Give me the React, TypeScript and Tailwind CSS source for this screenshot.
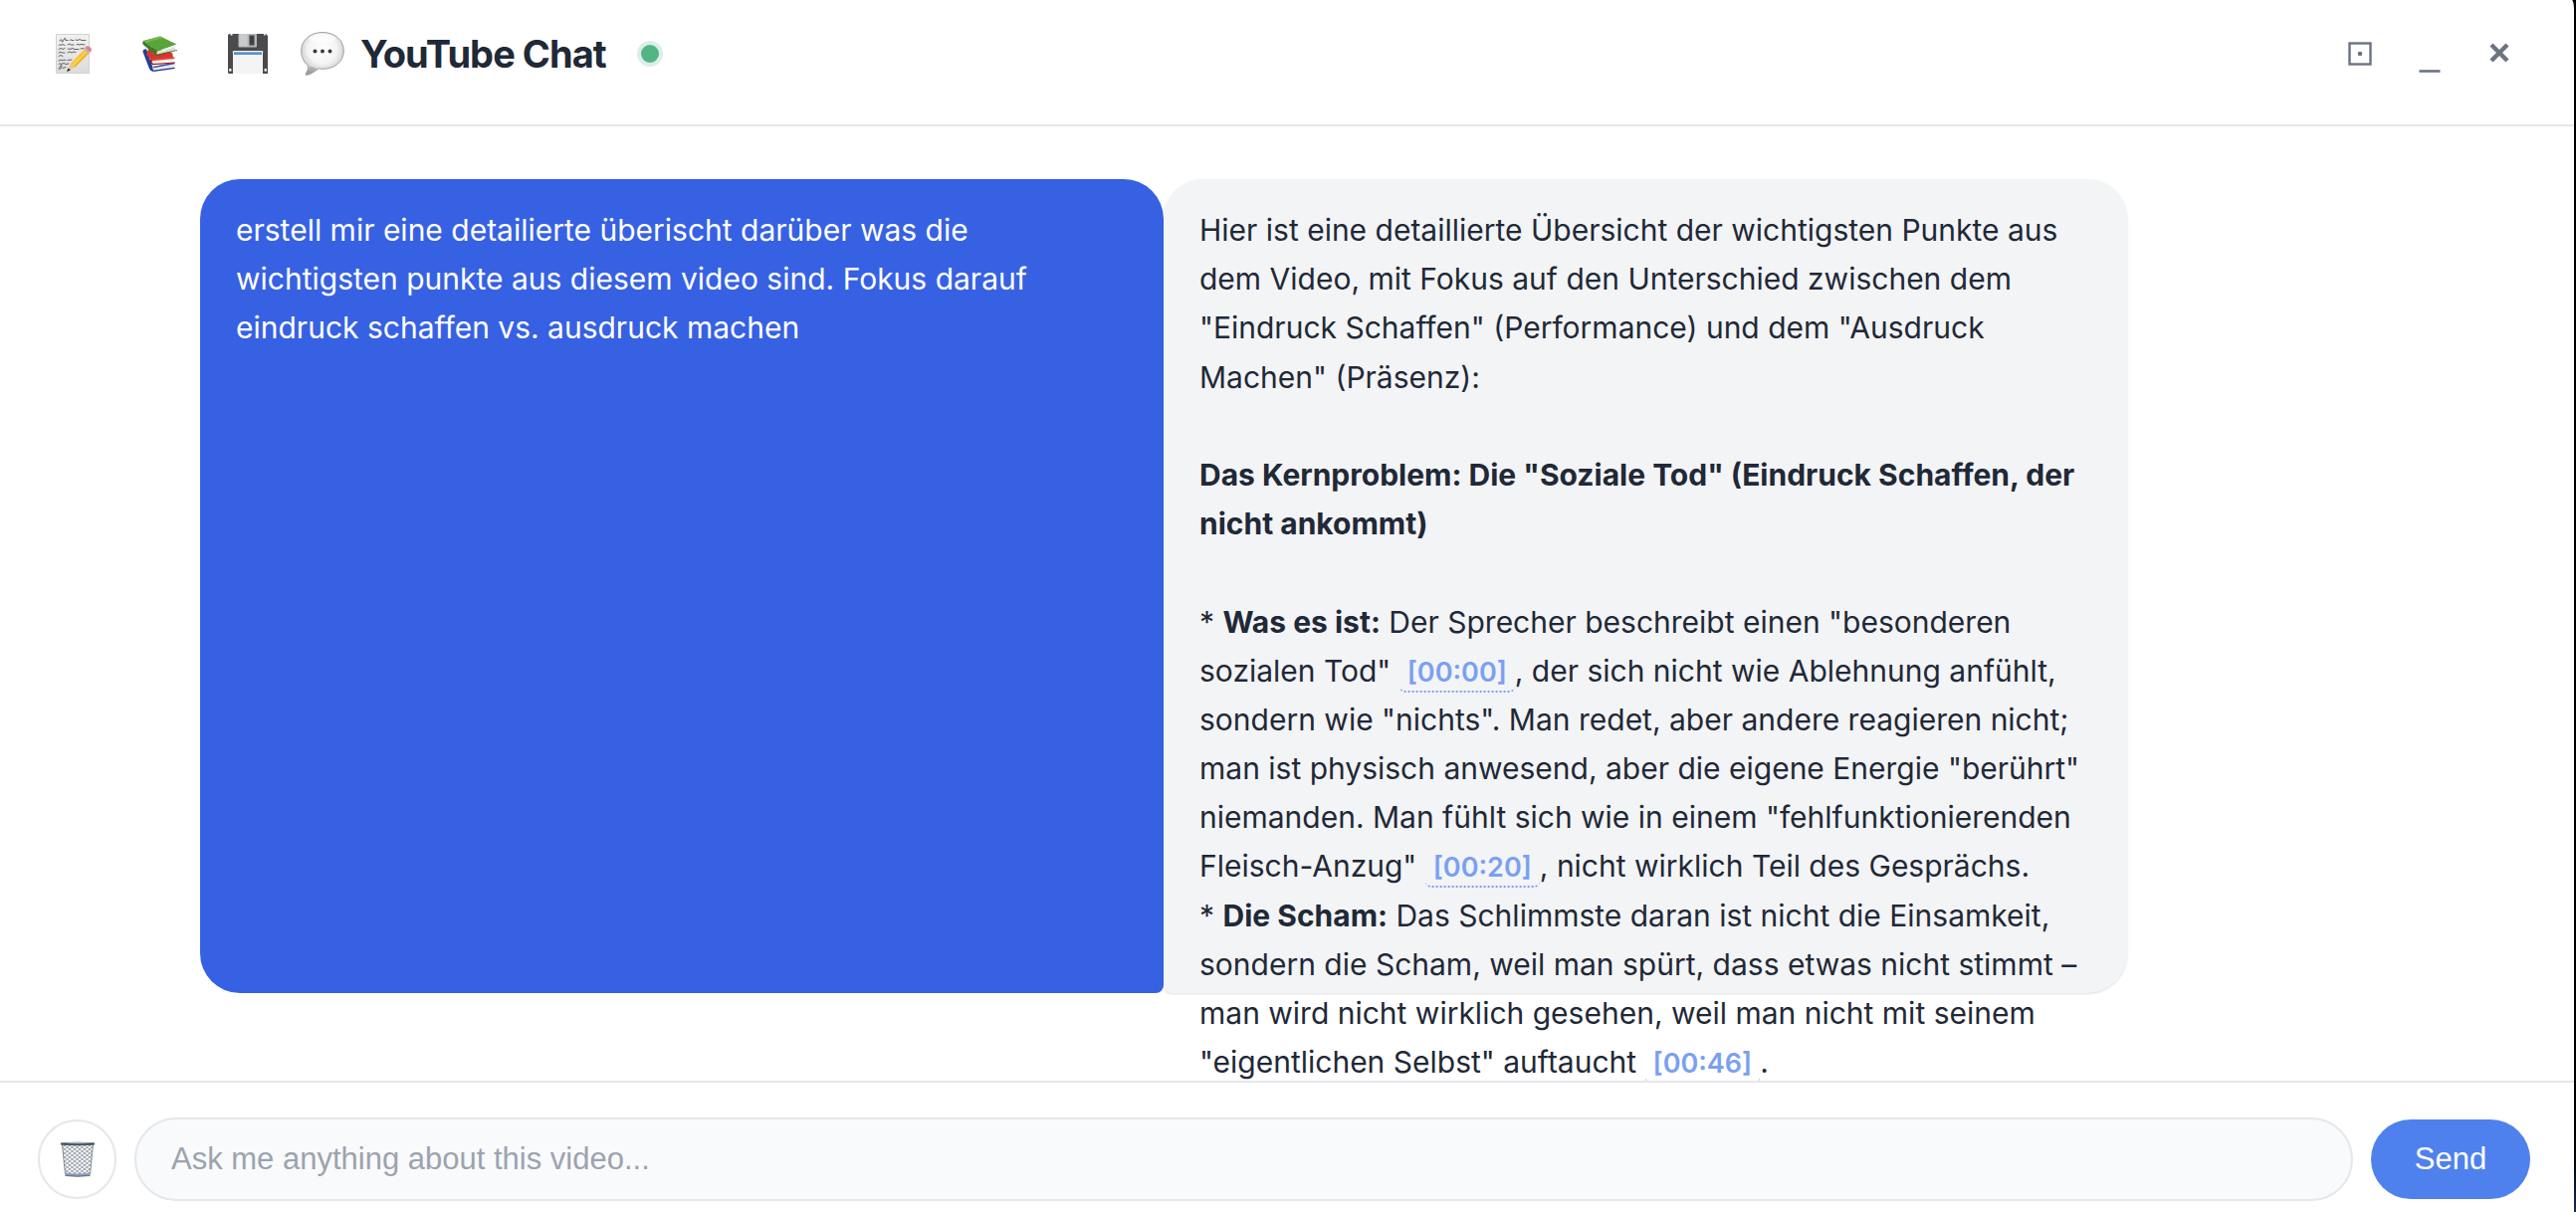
import React from "react";

function NoteIcon() {
  return (
    <svg className="h-10 w-9" viewBox="0 0 36 40" aria-hidden="true">
      <defs>
        <linearGradient id="paper" x1="0" y1="0" x2="0" y2="1">
          <stop offset="0" stopColor="#f1f1f0" />
          <stop offset="1" stopColor="#dcdcdb" />
        </linearGradient>
        <linearGradient id="pencil" x1="0" y1="0" x2="1" y2="1">
          <stop offset="0" stopColor="#ffe27a" />
          <stop offset="0.5" stopColor="#f6bd2b" />
          <stop offset="1" stopColor="#c98a12" />
        </linearGradient>
      </defs>
      <rect x="0.5" y="0.5" width="33" height="39" fill="url(#paper)" stroke="#d2d2d0" />
      <g stroke="#55555a" strokeWidth="0.9" fill="none" strokeLinecap="round">
        <path d="M4 7q1.500-3 2 0t2-1 2 .5h2M14 6.500q1-2 2 0h2M20 6l2 .5 2-1 2 1h4" />
        <path d="M3 11.500q1-2 2 0l2-1 2 1M12 11l2-1 1 1h3M21 11q1-2 2 0l3-.5 3 .5" />
        <path d="M3 15.500l2-1 2 1 2-1M12 15.500q1-2 2 0l3-1 2 1h4M25 15l3-.5" />
        <path d="M3 19l2-1 1 1h3M12 19l2-1 2 1 2-1 2 .5" />
        <path d="M3 22.500l2-1 2 1" />
        <path d="M3 27l2-1 2 1 1-1 2 .5M12 26.500l4-.5" />
        <path d="M3 30.500q1-2 2 0l3-1 2 1 3-.5" />
        <path d="M3 35q3-5 3-3t-2 4M7 34.500l3-1" />
      </g>
      <path d="M15.500 29.500 29.500 14.500 34 19 19 34Z" fill="url(#pencil)" />
      <path d="M17.500 31.500 31.500 17" stroke="#fbd65a" strokeWidth="1.600" />
      <path d="M11.500 37.500 15.300 29.300 19.200 33.800Z" fill="#ecc78c" />
      <path d="M11 38 12.500 34.400 15 36.500Z" fill="#2b2b2b" />
      <path d="M28 15.700 30 13.700 35 18 33 20Z" fill="#b9bcc0" />
      <path d="M29.500 14q1-2.500 3.500-1.500 3.500 1.500 3 4.200l-1.500 1.800Z" fill="#e6808c" />
    </svg>
  );
}

function BooksIcon() {
  return (
    <svg className="h-9 w-9" viewBox="0 0 36 36" aria-hidden="true">
      <path d="M1 14 4 13 8 25 11 32.500 11 36Q8 35.500 7 33L0.500 16Z" fill="#1f3f9e" />
      <path d="M10 31.500 32 27.500 33 32.500 11.500 35.500Z" fill="#e9e9e9" />
      <path d="M10.500 31 32.500 26.500 32.500 28.200 11.500 32.200Z" fill="#2d50b6" />
      <path d="M10.500 34.800 32.500 31.800 32.500 33 11.500 36Z" fill="#1c3688" />
      <path d="M6 13.500 12 11.500 30 17 31 22 9 24.500 4 19Z" fill="#d8352a" />
      <path d="M9 25.200 31 22.500 32 27 10.500 28.500Z" fill="#f0f0ee" />
      <path d="M8 23.500 32.500 21.500 32.500 23 9.500 25.200Z" fill="#e04a3a" />
      <path d="M8 23.500Q7 27.500 10.500 29.200L32.500 27.500 32.500 26.400 11 28Q8.800 26.500 9.800 24.500Z" fill="#a3190f" />
      <path d="M1 5 18 0.500 34.500 8.500 15 15.500Z" fill="#5aa53a" />
      <path d="M1 5 18 0.500 21 2 4 7Z" fill="#74b851" />
      <path d="M1 5Q-0.500 7 1 9L14 20 15 15.500Z" fill="#3b7d24" />
      <path d="M15.500 15.500 33.500 9.500Q32 12 33.500 14.500L15.500 19Q13.500 17 15.500 15.500Z" fill="#f4f4f2" />
      <path d="M15.500 17.200 33 12M16 18.300 33 13.500" stroke="#bdbdb9" strokeWidth="0.600" />
      <path d="M14 20 35 14.700 35 13.900 15.500 18.600Z" fill="#2d671a" />
    </svg>
  );
}

function FloppyIcon() {
  return (
    <svg className="h-10 w-10" viewBox="0 0 40 40" aria-hidden="true">
      <path d="M0 1.500Q0 0 1.500 0H38L40 2V40H1.500Q0 40 0 38.500Z" fill="#4b4b4d" />
      <rect x="10.500" y="0" width="18.500" height="13.500" rx="1" fill="#b4b8ba" />
      <rect x="11.500" y="0" width="8" height="12.500" fill="#c9cccd" />
      <rect x="21.500" y="1.500" width="5" height="10" fill="#414143" />
      <path d="M4.500 18.500Q4.500 17 6 17H34Q35.500 17 35.500 18.500V40H4.500Z" fill="#f4f4f4" />
      <rect x="6" y="18.300" width="28" height="2.700" fill="#5a8fcf" />
      <path d="M4.500 40V18.500M35.500 40V18.500" stroke="#333335" strokeWidth="0.800" />
      <rect x="1.200" y="35" width="2.200" height="2.600" fill="#fff" />
      <rect x="36.600" y="35" width="2.200" height="2.600" fill="#fff" />
      <rect x="2.500" y="0" width="2" height="1.500" fill="#fff" />
      <rect x="36" y="0" width="1.600" height="1.500" fill="#fff" />
    </svg>
  );
}

function BubbleIcon() {
  return (
    <svg className="h-11 w-11" viewBox="0 0 44 44" aria-hidden="true">
      <defs>
        <radialGradient id="bubble" cx="0.5" cy="0.4" r="0.62">
          <stop offset="0" stopColor="#ffffff" />
          <stop offset="0.55" stopColor="#f4f4f4" />
          <stop offset="0.8" stopColor="#d6d6d6" />
          <stop offset="1" stopColor="#9c9c9c" />
        </radialGradient>
      </defs>
      <path
        d="M22 0.500C34 0.500 43.300 8 43.300 19S34 37.300 22 37.300Q20 37.300 18.500 37C15 38.500 10 43.500 5.500 43.300Q4.500 43 5.200 42C7 39.500 8 37 7.500 34C3 30.500 0.700 25 0.700 19 0.700 8 10 0.500 22 0.500Z"
        fill="url(#bubble)"
        stroke="#a0a0a0"
        strokeWidth="1"
      />
      <path d="M5.500 43C8.500 40 9.500 37 9 34.500L17.500 37C14 39 10 43 5.500 43Z" fill="#9c9c9c" opacity="0.600" />
      <ellipse cx="22" cy="6.500" rx="13" ry="4.500" fill="#fff" opacity="0.600" />
      <circle cx="14.500" cy="19.500" r="2" fill="#3b3b3b" />
      <circle cx="22" cy="19.500" r="2" fill="#3b3b3b" />
      <circle cx="29.500" cy="19.500" r="2" fill="#3b3b3b" />
    </svg>
  );
}

function TrashIcon() {
  return (
    <svg className="h-9 w-9" viewBox="0 0 36 36" aria-hidden="true">
      <defs>
        <pattern id="mesh" width="5" height="4" patternUnits="userSpaceOnUse">
          <path d="M0 0 5 4M5 0 0 4" stroke="#6f7984" strokeWidth="0.700" />
        </pattern>
      </defs>
      <path d="M2.500 3 5.500 33Q18 36 30.500 33L33.500 3Z" fill="#fbfcfd" />
      <path d="M2.500 3 5.500 33Q18 36 30.500 33L33.500 3Z" fill="url(#mesh)" stroke="#6a727b" strokeWidth="0.800" />
      <path d="M5.400 31.500Q18 33.500 30.600 31.500L30.400 34.500Q18 36 5.600 34.500Z" fill="#8ba0bf" />
      <path d="M5.600 34.500Q18 36 30.400 34.500" stroke="#4a4f57" strokeWidth="0.800" fill="none" />
      <path d="M1 1.500Q18 0 35 1.500V3.500Q18 5 1 3.500Z" fill="#4a4f57" />
      <path d="M3 1.700Q18 0.300 33 1.700 18 2.700 3 1.700Z" fill="#a9c0dc" />
    </svg>
  );
}

function Stamp({ children }: { children: string }) {
  return (
    <a
      href="#"
      className="rounded-md border-b-2 border-dotted border-[#7aa0f2] px-2 py-0.5 text-[27px] font-semibold text-[#7aa0f2]"
    >
      {children}
    </a>
  );
}

export default function App() {
  return (
    <div className="h-screen bg-linear-to-b from-black from-93% to-[#1c2b4b] pr-0.5">
      <div className="flex h-full flex-col overflow-hidden bg-white font-['Inter',sans-serif] text-[#1f2937] [border-top-right-radius:2px_10px]">
        <header className="flex h-[127px] shrink-0 items-start justify-between border-b-2 border-[#e5e7eb] pt-[30px] pr-[63px] pl-[56px]">
          <div className="flex h-12 items-center">
            <button aria-label="Notes" className="mr-[51px]"><NoteIcon /></button>
            <button aria-label="Library" className="mr-[50px]"><BooksIcon /></button>
            <button aria-label="Save" className="mr-[33px]"><FloppyIcon /></button>
            <h1 className="flex items-center gap-4 text-[38px] leading-12 font-bold tracking-tight">
              <BubbleIcon />
              YouTube Chat
            </h1>
            <span className="ml-[35px] size-[18px] rounded-full bg-[#52b585] ring-4 ring-[#dcefe6]" />
          </div>
          <div className="flex h-12 items-center gap-[46px] text-[#6b7280]">
            <button aria-label="Maximize">
              <svg className="size-6" viewBox="0 0 24 24" aria-hidden="true">
                <rect x="1.500" y="1.500" width="21" height="21" fill="none" stroke="currentColor" strokeWidth="2.400" />
                <circle cx="12" cy="12" r="2.300" fill="currentColor" />
              </svg>
            </button>
            <button aria-label="Minimize">
              <svg className="h-10 w-6" viewBox="0 0 24 40" aria-hidden="true">
                <path d="M1.500 37.500H22.500" stroke="currentColor" strokeWidth="2.600" />
              </svg>
            </button>
            <button aria-label="Close">
              <svg className="size-6" viewBox="0 0 24 24" aria-hidden="true">
                <path d="M4 3 20 19M20 3 4 19" stroke="currentColor" strokeWidth="4.400" />
              </svg>
            </button>
          </div>
        </header>

        <main className="min-h-0 flex-1 overflow-hidden px-10 pt-[53px]">
          <div className="mx-auto flex h-[818px] w-full max-w-[2184px] text-[30px] leading-[1.64]">
            <div className="max-w-[968px] flex-1 rounded-[40px] rounded-br-lg bg-[#3761e3] px-9 py-[27px] text-white">
              <p>
                erstell mir eine detailierte überischt darüber was die wichtigsten punkte aus diesem video sind. Fokus
                darauf eindruck schaffen vs. ausdruck machen
              </p>
            </div>
            <div className="max-w-[968px] flex-1 rounded-[40px] rounded-bl-lg bg-[#f3f4f6] px-9 py-[27px] shadow-sm">
              <p>
                Hier ist eine detaillierte Übersicht der wichtigsten Punkte aus dem Video, mit Fokus auf den
                Unterschied zwischen dem "Eindruck Schaffen" (Performance) und dem "Ausdruck Machen" (Präsenz):
              </p>
              <br />
              <p className="font-bold">
                Das Kernproblem: Die "Soziale Tod" (Eindruck Schaffen, der nicht ankommt)
              </p>
              <br />
              <p>
                * <strong>Was es ist:</strong> Der Sprecher beschreibt einen "besonderen sozialen
                Tod" <Stamp>[00:00]</Stamp>, der sich nicht wie Ablehnung anfühlt, sondern wie "nichts". Man redet, aber
                andere reagieren nicht; man ist physisch anwesend, aber die eigene Energie "berührt" niemanden. Man
                fühlt sich wie in einem "fehlfunktionierenden Fleisch-Anzug" <Stamp>[00:20]</Stamp>, nicht wirklich
                Teil des Gesprächs.
              </p>
              <p>
                * <strong>Die Scham:</strong> Das Schlimmste daran ist nicht die Einsamkeit, sondern die Scham, weil
                man spürt, dass etwas nicht stimmt – man wird nicht wirklich gesehen, weil man nicht mit seinem
                "eigentlichen Selbst" auftaucht <Stamp>[00:46]</Stamp>.
              </p>
            </div>
          </div>
        </main>

        <form
          className="flex shrink-0 items-center gap-[18px] border-t-2 border-[#e5e7eb] bg-white pt-[35px] pr-11 pb-[11px] pl-[38px] font-['Liberation_Sans',sans-serif] text-[31px]"
          onSubmit={(e) => e.preventDefault()}
        >
          <button
            type="button"
            aria-label="Clear chat"
            className="flex h-20 w-[79px] shrink-0 items-center justify-center rounded-full border-2 border-[#e5e7eb]"
          >
            <TrashIcon />
          </button>
          <input
            type="text"
            aria-label="Ask me anything about this video"
            placeholder="Ask me anything about this video..."
            className="h-[84px] min-w-0 flex-1 rounded-full border-2 border-[#e5e7eb] bg-[#f9fafb] px-[35px] placeholder:text-[#9ca3af]"
          />
          <button type="submit" className="h-20 w-40 shrink-0 rounded-full bg-[#4f81ee] text-white">
            Send
          </button>
        </form>
      </div>
    </div>
  );
}
